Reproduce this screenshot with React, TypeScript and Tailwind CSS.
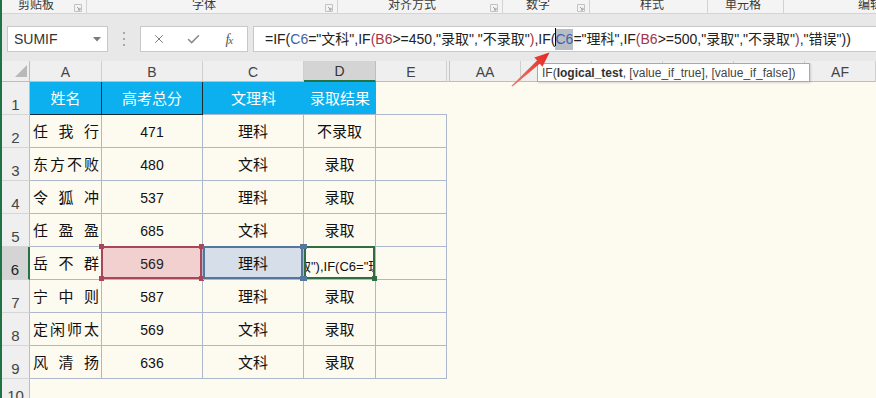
import React from "react";
import { X, Check } from "lucide-react";

const FONT = "font-['Liberation_Sans','Noto_Sans_CJK_SC',sans-serif]";
const LB = "border-[#aeb8cc]";

const rows: [string, string, string, string][] = [
  ["任我行", "471", "理科", "不录取"],
  ["东方不败", "480", "文科", "录取"],
  ["令狐冲", "537", "理科", "录取"],
  ["任盈盈", "685", "文科", "录取"],
  ["岳不群", "569", "理科", ""],
  ["宁中则", "587", "理科", "录取"],
  ["定闲师太", "569", "文科", "录取"],
  ["风清扬", "636", "文科", "录取"],
];

function Launcher() {
  return (
    <svg width="8" height="8" viewBox="0 0 8 8" className="mt-[4px]">
      <path d="M0.5 0.5h7v7h-7z" fill="none" stroke="#c2c2c2" />
      <path d="M3 3l3 3M3.8 6h2.2V3.8" fill="none" stroke="#9a9a9a" />
    </svg>
  );
}

function RibbonGroup({ label, w, launcher, pl }: { label: string; w: string; launcher?: boolean; pl?: string }) {
  return (
    <div className={`${w} h-full flex border-r border-[#d2d2d2] shrink-0`}>
      <div className={`flex-1 ${pl ?? "text-center"} whitespace-nowrap text-[12px] leading-[12px] -mt-[1px] text-[#3a3a3a]`}>{label}</div>
      {launcher && (
        <div className="w-[16px] flex justify-center">
          <Launcher />
        </div>
      )}
    </div>
  );
}

function RowHeader({ n, sel, h = "h-[33px]" }: { n: number; sel?: boolean; h?: string }) {
  return (
    <div
      className={`w-[28px] ${h} shrink-0 flex items-end justify-center pb-[2px] text-[15px] leading-none border-b border-[#d6d6d6] ${
        sel ? "bg-[#d4d4d4] border-r-2 border-r-[#217346] text-[#222]" : "bg-[#efefef] border-r border-r-[#bdbdbd] text-[#444]"
      }`}
    >
      {n}
    </div>
  );
}

function Name({ s }: { s: string }) {
  return (
    <div className={`w-[72px] h-[33px] shrink-0 border-r border-b ${LB} flex justify-between items-center pl-[3px] pr-[2px] pt-[2px] text-[15px] text-[#111]`}>
      {s.split("").map((c, i) => (
        <span key={i}>{c}</span>
      ))}
    </div>
  );
}

function Cell({ w, children, cjk }: { w: string; children?: React.ReactNode; cjk?: boolean }) {
  return (
    <div className={`${w} h-[33px] shrink-0 border-r border-b ${LB} flex items-center justify-center pt-[2px] ${cjk ? "text-[15px]" : "text-[14px]"} text-[#111]`}>
      {children}
    </div>
  );
}

function Handle({ pos, color }: { pos: string; color: string }) {
  return <span className={`absolute ${pos} w-[5px] h-[5px] ${color}`} />;
}

export default function App() {
  const colHeads: [string, string][] = [
    ["A", "w-[72px]"],
    ["B", "w-[101px]"],
    ["C", "w-[101px]"],
    ["D", "w-[72px]"],
    ["E", "w-[71px]"],
  ];
  return (
    <div className={`relative w-[876px] h-[398px] overflow-hidden border-l-2 border-[#217346] bg-[#fdfaf0] ${FONT}`}>
      {/* ribbon group labels */}
      <div className="h-[14px] flex bg-[#f4f4f4] border-b border-[#d4d4d4] overflow-hidden">
        <RibbonGroup label="剪贴板" w="w-[85px]" launcher />
        <RibbonGroup label="字体" w="w-[251px]" launcher />
        <RibbonGroup label="对齐方式" w="w-[165px]" launcher />
        <RibbonGroup label="数字" w="w-[87px]" launcher />
        <RibbonGroup label="样式" w="w-[118px]" pl="pl-[50px]" />
        <RibbonGroup label="单元格" w="w-[76px]" pl="pl-[17px]" />
        <div className="flex-1 pl-[74px] whitespace-nowrap text-[12px] leading-[12px] -mt-[1px] text-[#3a3a3a]">编辑</div>
      </div>

      {/* formula bar */}
      <div className="h-[47px] flex items-start pt-[12px] bg-[#e8e8e8]">
        <div className="ml-[5px] w-[101px] h-[26px] bg-white border border-[#c8c8c8] flex items-center justify-between pl-[6px] pr-[6px] text-[14px] text-[#333]">
          <span>SUMIF</span>
          <svg width="8" height="5" viewBox="0 0 8 5">
            <path d="M0 0h8L4 4.5z" fill="#7a7a7a" />
          </svg>
        </div>
        <div className="w-[32px] h-[26px] flex flex-col items-center justify-center gap-[4px]">
          <span className="w-[2px] h-[2px] bg-[#a8a8a8]" />
          <span className="w-[2px] h-[2px] bg-[#a8a8a8]" />
          <span className="w-[2px] h-[2px] bg-[#a8a8a8]" />
        </div>
        <div className="w-[108px] h-[26px] bg-white border border-[#c8c8c8] flex">
          <div className="w-[36px] flex items-center justify-center text-[#707070]">
            <X size={14} strokeWidth={1.6} />
          </div>
          <div className="w-[36px] flex items-center justify-center text-[#8a8a8a]">
            <Check size={15} strokeWidth={2.4} />
          </div>
          <div className="w-[36px] flex items-center justify-center text-[#555] font-['Liberation_Serif',serif] italic text-[14px]">
            f<span className="text-[11px] -ml-[1px] mt-[3px]">x</span>
          </div>
        </div>
        <div className="ml-[5px] flex-1 h-[26px] bg-white border border-r-0 border-[#c8c8c8] flex items-center pl-[11px] text-[14px] text-[#222] whitespace-nowrap overflow-hidden">
          <span>=IF(</span>
          <span className="text-[#3d63ad]">C6</span>
          <span>="文科",IF</span>
          <span className="text-[#a33448]">(B6</span>
          <span>&gt;=450,"录取","不录取"</span>
          <span className="text-[#a33448]">)</span>
          <span>,IF(</span>
          <span className="relative bg-[#b9bdc4] text-[#3d63ad]">
            <span className="absolute left-0 top-[-1px] w-px h-[18px] bg-black" />
            C6
          </span>
          <span>="理科",IF</span>
          <span className="text-[#a33448]">(B6</span>
          <span>&gt;=500,"录取","不录取"</span>
          <span className="text-[#a33448]">)</span>
          <span>,"错误"))</span>
        </div>
      </div>

      {/* column headers */}
      <div className="h-[21px] flex text-[14px] text-[#444]">
        <div className="w-[28px] shrink-0 bg-[#efefef] border-r border-b border-[#bdbdbd] relative">
          <svg width="28" height="21" viewBox="0 0 28 21" className="absolute inset-0">
            <path d="M25 4V16H13z" fill="#b9b9b9" />
          </svg>
        </div>
        {colHeads.map(([l, w]) =>
          l === "D" ? (
            <div key={l} className={`${w} shrink-0 bg-[#d4d4d4] border-r border-[#bdbdbd] border-b-2 border-b-[#217346] flex items-center justify-center pt-[2px] text-[#333]`}>
              {l}
            </div>
          ) : (
            <div key={l} className={`${w} shrink-0 bg-[#efefef] border-r border-b border-[#cfcfcf] border-b-[#bdbdbd] flex items-center justify-center pt-[2px]`}>
              {l}
            </div>
          )
        )}
        <div className="w-[3px] shrink-0 bg-[#efefef] border-r border-b border-[#c4c4c4]" />
        {["AA", "", "", "", "", "AF"].map((l, i) => (
          <div key={i} className="w-[71px] shrink-0 bg-[#efefef] border-r border-b border-[#cfcfcf] border-b-[#bdbdbd] flex items-center justify-center pt-[2px]">
            {l}
          </div>
        ))}
        <div className="flex-1 bg-[#efefef] border-b border-[#bdbdbd]" />
      </div>

      {/* row 1 */}
      <div className="h-[33px] flex">
        <RowHeader n={1} />
        <div className="w-[72px] shrink-0 bg-[#0db0ee] border-r border-b border-[#1d2933] flex items-center justify-center pt-[2px] text-[15px] text-white">姓名</div>
        <div className="w-[101px] shrink-0 bg-[#0db0ee] border-r border-b border-[#1d2933] flex items-center justify-center pt-[2px] text-[15px] text-white">高考总分</div>
        <div className={`w-[101px] shrink-0 bg-[#0db0ee] border-b ${LB} flex items-center justify-center pt-[2px] text-[15px] text-white`}>文理科</div>
        <div className={`w-[72px] shrink-0 bg-[#0db0ee] border-b ${LB} flex items-center justify-center pt-[2px] text-[15px] text-white`}>录取结果</div>
        <div className={`w-[71px] shrink-0 border-b ${LB}`} />
        <div className="flex-1" />
      </div>

      {rows.map(([name, score, subj, res], i) => {
        const n = i + 2;
        if (n === 6) {
          return (
            <div key={n} className="h-[33px] flex">
              <RowHeader n={n} sel />
              <Name s={name} />
              <div className={`relative w-[101px] h-[33px] shrink-0 bg-[#f2d0d0] border-r border-b ${LB} flex items-center justify-center pt-[2px] text-[14px] text-[#222]`}>
                {score}
                <div className="absolute -top-px -left-px right-0 bottom-0 border-2 border-[#a8475a]" />
                <Handle pos="-top-[3px] -left-[3px]" color="bg-[#a8475a]" />
                <Handle pos="-top-[3px] -right-[2px]" color="bg-[#a8475a]" />
                <Handle pos="-bottom-[2px] -left-[3px]" color="bg-[#a8475a]" />
                <Handle pos="-bottom-[2px] -right-[2px]" color="bg-[#a8475a]" />
              </div>
              <div className={`relative w-[101px] h-[33px] shrink-0 bg-[#d6dfe9] border-r border-b ${LB} flex items-center justify-center pt-[2px] text-[15px] text-[#111]`}>
                {subj}
                <div className="absolute -top-px left-0 right-0 bottom-0 border-2 border-[#56779c]" />
                <Handle pos="-top-[3px] -right-[2px]" color="bg-[#56779c]" />
                <Handle pos="-bottom-[2px] -right-[2px]" color="bg-[#56779c]" />
              </div>
              <div className={`relative w-[72px] h-[33px] shrink-0 border-r border-b ${LB}`}>
                <div className="absolute inset-0 overflow-hidden flex items-end pb-[3px]">
                  <span className="whitespace-nowrap -ml-[6px] text-[13px] text-[#111]">取"),IF(C6="理</span>
                </div>
                <div className="absolute -top-px left-0 right-0 bottom-0 border-2 border-[#2f6d43]" />
                <Handle pos="-top-[3px] -left-[2px]" color="bg-[#56779c]" />
                <Handle pos="-bottom-[2px] -left-[2px]" color="bg-[#56779c]" />
                <Handle pos="-bottom-[2px] -right-[2px]" color="bg-[#2f6d43]" />
              </div>
              <Cell w="w-[71px]" />
              <div className="flex-1" />
            </div>
          );
        }
        return (
          <div key={n} className="h-[33px] flex">
            <RowHeader n={n} />
            <Name s={name} />
            <Cell w="w-[101px]">{score}</Cell>
            <Cell w="w-[101px]" cjk>
              {subj}
            </Cell>
            <Cell w="w-[72px]" cjk>
              {res}
            </Cell>
            <Cell w="w-[71px]" />
            <div className="flex-1" />
          </div>
        );
      })}

      <div className="h-[27px] flex">
        <RowHeader n={10} h="h-[27px]" />
        <div className="flex-1" />
      </div>

      {/* tooltip */}
      <div className="absolute left-[535px] top-[63px] w-[273px] h-[19px] bg-white border border-[#a9a9a9] shadow-[1px_1px_2px_rgba(0,0,0,0.15)] flex items-center pl-[4px] text-[12px] text-[#444] whitespace-nowrap">
        IF(<b className="font-bold text-[#333]">logical_test</b>, [value_if_true], [value_if_false])
      </div>

      {/* red arrow */}
      <svg className="absolute left-[498px] top-[45px]" width="60" height="50" viewBox="0 0 60 50">
        <defs>
          <linearGradient id="ag" x1="12" y1="41" x2="49" y2="8" gradientUnits="userSpaceOnUse">
            <stop offset="0" stopColor="#f27a70" />
            <stop offset="1" stopColor="#e3271f" />
          </linearGradient>
        </defs>
        <polygon
          points="11.5,40.7 37.1,15.6 34.3,12.4 49.5,7.5 42.5,21.8 39.7,18.7 12.5,41.5"
          fill="url(#ag)"
        />
      </svg>
    </div>
  );
}
